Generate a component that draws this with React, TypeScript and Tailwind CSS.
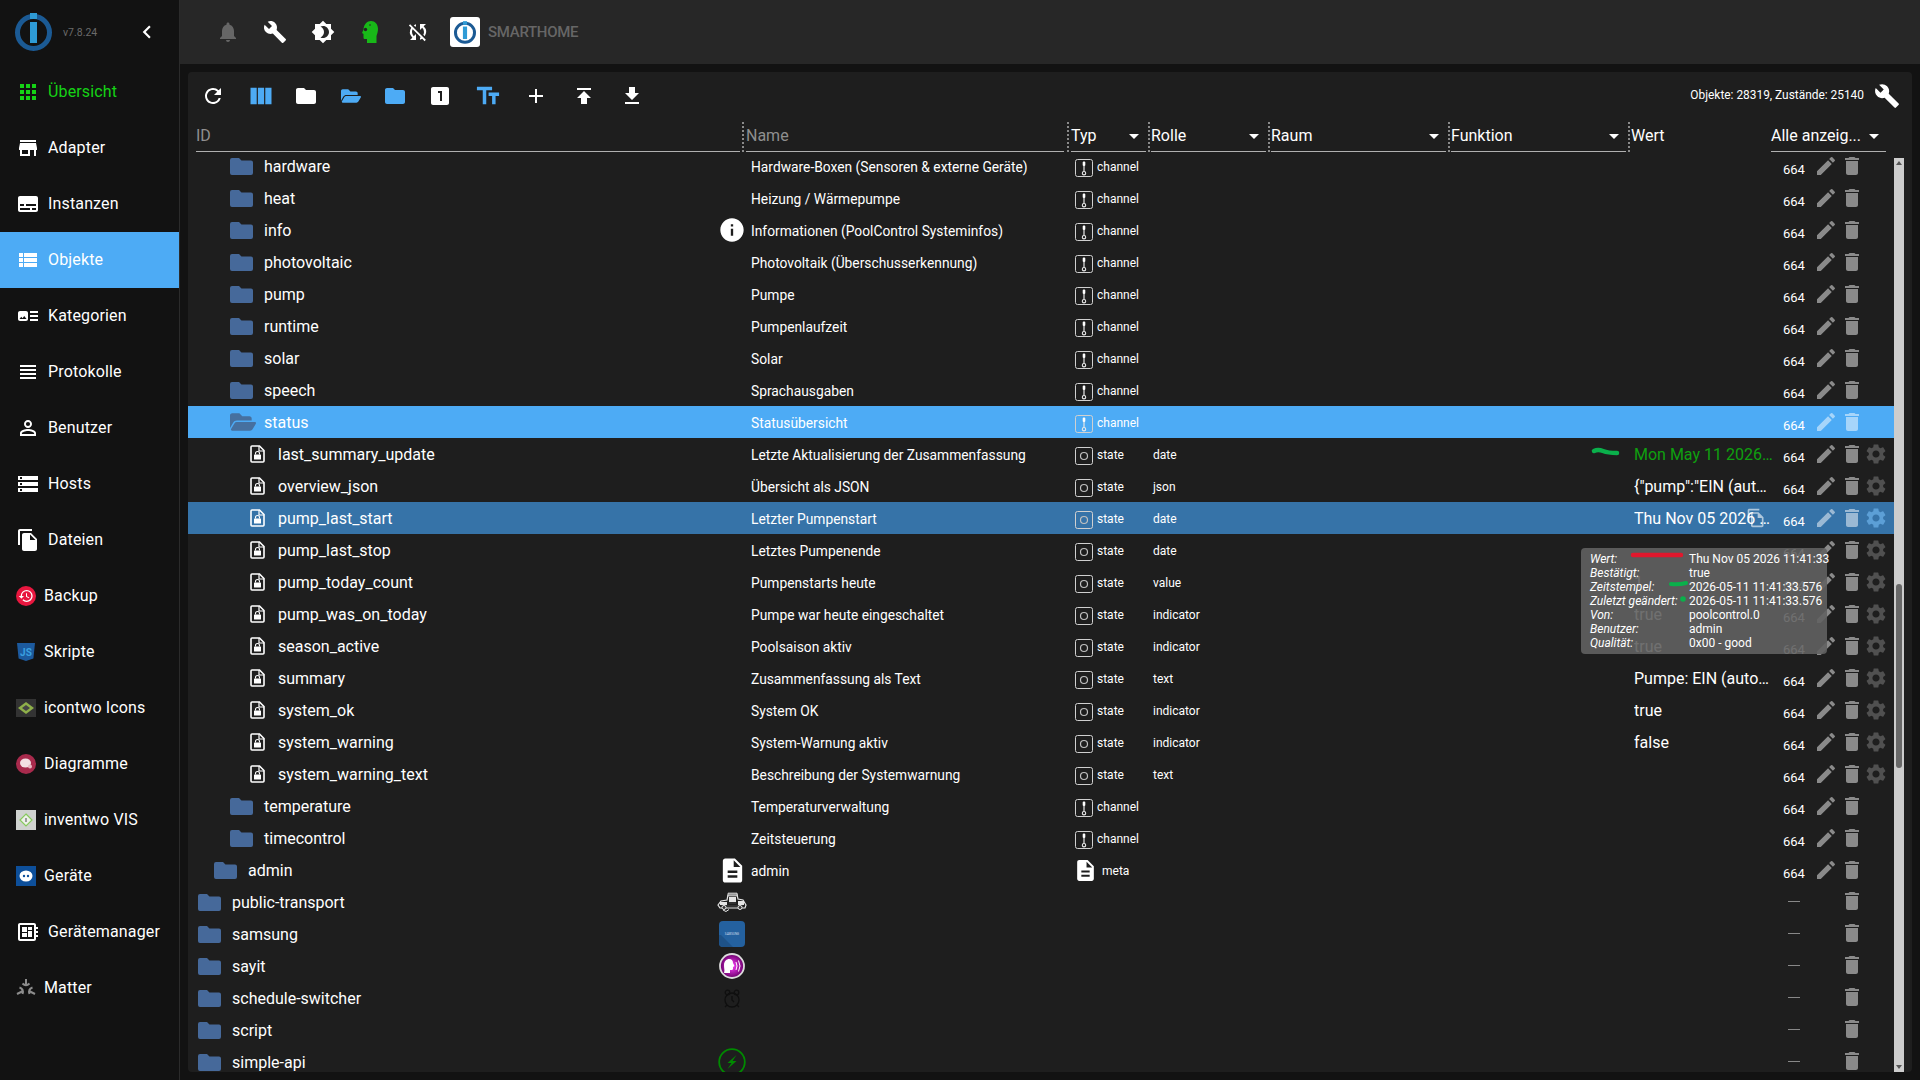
import type { ReactNode } from 'react';
import {
  MdAdd, MdApps, MdArrowDropDown, MdArtTrack, MdBrightness4, MdBuild, MdChevronLeft, MdDelete, MdDescription,
  MdDeveloperBoard, MdEdit, MdFileCopy, MdFolder, MdGetApp, MdHistory, MdInfo, MdLooksOne, MdNotifications,
  MdOutlineFileCopy, MdPersonOutline, MdPublish, MdRefresh, MdSettings, MdStorage, MdStore, MdSubtitles, MdSyncDisabled,
  MdTextFields, MdViewColumn, MdViewHeadline, MdViewList,
} from 'react-icons/md';
import { FaFolderOpen } from 'react-icons/fa';

function IoLogo({ className }: { className?: string }) {
  return (
    <svg viewBox="0 0 37 38" className={className}>
      <circle cx="18.5" cy="19.5" r="16" fill="none" stroke="#1b5a94" strokeWidth="5" />
      <rect x="15" y="0" width="7" height="6" fill="#2e9bd6" />
      <rect x="15" y="9" width="7" height="21" fill="#2e9bd6" />
    </svg>
  );
}

function BackupImg() {
  return (
    <span className="flex w-5 h-5 items-center justify-center rounded-full bg-[#e8173f] text-white"><MdHistory size={16} /></span>
  );
}

function ScriptsImg() {
  return (
    <svg viewBox="0 0 20 20" className="w-5 h-5">
      <path d="M1 1h18l-1.6 15.5L10 19l-7.4-2.5z" fill="#1c5a9e" />
      <text x="10" y="14" textAnchor="middle" fontSize="10" fontWeight="700" fill="#3aa0e0" fontFamily="Roboto, sans-serif">JS</text>
    </svg>
  );
}

function IcontwoImg() {
  return (
    <svg viewBox="0 0 20 20" className="w-5 h-5">
      <rect x="0" y="1" width="20" height="18" fill="#333" />
      <path d="M10 4l8 6-8 6-8-6z" fill="#8fb04a" />
      <path d="M10 7l4 3-4 3-4-3z" fill="#444" />
    </svg>
  );
}

function DiagramImg() {
  return (
    <svg viewBox="0 0 20 20" className="w-5 h-5">
      <circle cx="10" cy="10" r="10" fill="#a82a4c" />
      <ellipse cx="9.5" cy="9" rx="5.5" ry="4.5" fill="#f3dfe3" />
      <circle cx="14" cy="12.5" r="2" fill="#e7b9c3" />
    </svg>
  );
}

function VisImg() {
  return (
    <svg viewBox="0 0 20 20" className="w-5 h-5">
      <rect width="20" height="20" fill="#cfd2cf" />
      <path d="M10 4l6 6-6 6-6-6z" fill="#eef2ea" stroke="#86c95c" strokeWidth="1.2" />
      <rect x="9.4" y="8" width="1.2" height="4" fill="#666" />
    </svg>
  );
}

function DevicesImg() {
  return (
    <svg viewBox="0 0 20 20" className="w-5 h-5">
      <rect width="20" height="20" fill="#0d4f9a" />
      <ellipse cx="10" cy="10" rx="6.5" ry="5.5" fill="#fff" />
      <circle cx="8" cy="10" r="1.2" fill="#0d4f9a" />
      <circle cx="12" cy="10" r="1.2" fill="#0d4f9a" />
    </svg>
  );
}

function MatterImg() {
  return (
    <svg viewBox="0 0 20 20" className="w-5 h-5" fill="none" stroke="#8c8c8c" strokeWidth="2">
      <path d="M10 1v6" />
      <path d="M6.5 5.5Q10 9 13.5 5.5" />
      <path d="M1 16l6-3" />
      <path d="M3.5 9.5Q8 11 6.5 16" />
      <path d="M19 16l-6-3" />
      <path d="M16.5 9.5Q12 11 13.5 16" />
    </svg>
  );
}

const NAV: { label: string; icon: ReactNode; img?: boolean }[] = [
  { label: 'Übersicht', icon: <MdApps size={24} /> },
  { label: 'Adapter', icon: <MdStore size={24} /> },
  { label: 'Instanzen', icon: <MdSubtitles size={24} /> },
  { label: 'Objekte', icon: <MdViewList size={24} /> },
  { label: 'Kategorien', icon: <MdArtTrack size={24} /> },
  { label: 'Protokolle', icon: <MdViewHeadline size={24} /> },
  { label: 'Benutzer', icon: <MdPersonOutline size={24} /> },
  { label: 'Hosts', icon: <MdStorage size={24} /> },
  { label: 'Dateien', icon: <MdFileCopy size={24} /> },
  { label: 'Backup', icon: <BackupImg />, img: true },
  { label: 'Skripte', icon: <ScriptsImg />, img: true },
  { label: 'icontwo Icons', icon: <IcontwoImg />, img: true },
  { label: 'Diagramme', icon: <DiagramImg />, img: true },
  { label: 'inventwo VIS', icon: <VisImg />, img: true },
  { label: 'Geräte', icon: <DevicesImg />, img: true },
  { label: 'Gerätemanager', icon: <MdDeveloperBoard size={24} /> },
  { label: 'Matter', icon: <MatterImg />, img: true },
];

function Sidebar() {
  return (
    <aside className="w-[180px] shrink-0 flex flex-col bg-[#121212] border-r border-[#2b2b2b]">
      <div className="h-16 flex items-center pl-[15px]">
        <IoLogo className="w-[37px] h-[38px] shrink-0" />
        <span className="ml-[11px] mt-[2px] w-[36px] shrink-0 text-[10.5px] text-[#6a6a6a]">v7.8.24</span>
        <MdChevronLeft size={26} className="text-white ml-[35px] shrink-0" />
      </div>
      {NAV.map(item => (
        <div
          key={item.label}
          className={`h-14 flex items-center gap-2 pl-4 text-[16px] tracking-[0.15px] ${item.label === 'Objekte' ? 'bg-[#4dabf5] text-white' : item.label === 'Übersicht' ? 'text-[#15d315]' : 'text-white'}`}
        >
          <span className={`flex items-center justify-center ${item.img ? 'w-5' : 'w-6'}`}>{item.icon}</span>
          {item.label}
        </div>
      ))}
    </aside>
  );
}

function HeadIcon() {
  return (
    <svg viewBox="0 0 16 22" className="w-4 h-[22px]">
      <path d="M9 0c4 0 7 3 7 8 0 3-1 5-1.5 7v7H5v-4H3c-1 0-1.500-.5-1.500-1.500V13L0 12l1.500-3.500C2 3 5 0 9 0z" fill="#18b818" />
      <circle cx="3.500" cy="8.500" r="1.700" fill="#222" />
      <circle cx="8" cy="4" r="0.800" fill="#222" />
    </svg>
  );
}

function TopBar() {
  return (
    <header className="h-16 shrink-0 flex items-center pl-6 bg-[#272727]">
      <span className="w-[47.5px] flex justify-center text-[#666]"><MdNotifications size={24} /></span>
      <span className="w-[47.5px] flex justify-center text-white"><MdBuild size={24} /></span>
      <span className="w-[47.5px] flex justify-center text-white"><MdBrightness4 size={24} /></span>
      <span className="w-[47.5px] flex justify-center"><HeadIcon /></span>
      <span className="w-[47.5px] flex justify-center text-white"><MdSyncDisabled size={24} /></span>
      <span className="ml-[8.5px] w-[30px] h-[30px] flex items-center justify-center rounded-[3px] bg-white"><IoLogo className="w-[22px] h-[23px]" /></span>
      <span className="ml-2 text-[15px] tracking-[-0.3px] font-medium text-[#666]">SMARTHOME</span>
    </header>
  );
}

function Toolbar() {
  return (
    <div className="h-12 shrink-0 flex items-center pl-px pr-3">
      <span className="w-12 flex justify-center text-white"><MdRefresh size={24} /></span>
      <span className="w-[47px] flex justify-center text-[#4dabf5]"><MdViewColumn size={28} /></span>
      <span className="w-[44px] flex justify-center text-white"><MdFolder size={24} /></span>
      <span className="w-[45px] flex justify-center text-[#4dabf5]"><FaFolderOpen size={20} /></span>
      <span className="w-[43px] flex justify-center text-[#4dabf5]"><MdFolder size={24} /></span>
      <span className="w-[48px] flex justify-center text-white"><MdLooksOne size={24} /></span>
      <span className="w-[48px] flex justify-center text-[#4dabf5]"><MdTextFields size={28} /></span>
      <span className="w-[48px] flex justify-center text-white"><MdAdd size={24} /></span>
      <span className="w-[48px] flex justify-center text-white"><MdPublish size={24} /></span>
      <span className="w-[48px] flex justify-center text-white"><MdGetApp size={24} /></span>
      <span className="ml-auto text-[11.9px] text-white mr-[10px]">Objekte: 28319, Zustände: 25140</span>
      <MdBuild size={26} className="text-white" />
    </div>
  );
}

function Separator({ className }: { className: string }) {
  return (
    <div className={`h-[30px] self-end flex justify-center ${className}`}>
      <span className="h-full border-l-2 border-dotted border-[#8a8a8a]" />
    </div>
  );
}

function FilterCell({ label, width, select }: { label: string; width: string; select?: boolean }) {
  return (
    <div className={`h-[30px] self-end flex items-center justify-between pb-[2px] border-b border-[#b0b0b0] text-[16px] ${width} ${select ? 'text-white' : 'text-[#8f8f8f]'}`}>
      <span>{label}</span>
      {select && <MdArrowDropDown size={24} className="text-white" />}
    </div>
  );
}

function HeaderRow() {
  return (
    <div className="relative z-10 h-8 -mb-[2px] shrink-0 flex pl-2">
      <FilterCell label="ID" width="w-[544px]" />
      <Separator className="w-[6px]" />
      <FilterCell label="Name" width="w-[318px]" />
      <Separator className="w-[7px]" />
      <FilterCell label="Typ" width="w-[75px]" select />
      <Separator className="w-[5px]" />
      <FilterCell label="Rolle" width="w-[115px]" select />
      <Separator className="w-[5px]" />
      <FilterCell label="Raum" width="w-[175px]" select />
      <Separator className="w-[5px]" />
      <FilterCell label="Funktion" width="w-[175px]" select />
      <Separator className="w-[5px]" />
      <div className="h-[30px] w-[140px] self-end flex items-center pb-[3px] text-[16px] text-white">Wert</div>
      <FilterCell label="Alle anzeig..." width="w-[115px]" select />
    </div>
  );
}

function FolderIcon() {
  return (
    <svg viewBox="0 0 23 17" className="w-[23px] h-[17px] shrink-0">
      <path d="M2 0h7l2.500 2.500H21a2 2 0 0 1 2 2V15a2 2 0 0 1-2 2H2a2 2 0 0 1-2-2V2a2 2 0 0 1 2-2z" fill="#46699a" />
    </svg>
  );
}

function StateFile() {
  return (
    <svg viewBox="0 0 15 18" className="w-[15px] h-[18px] shrink-0">
      <path d="M2 1h7.500L14 5.500V16a1 1 0 0 1-1 1H2a1 1 0 0 1-1-1V2a1 1 0 0 1 1-1z" fill="none" stroke="#fff" strokeWidth="1.600" />
      <path d="M9 1v5h5" fill="none" stroke="#fff" strokeWidth="1.200" />
      <rect x="4" y="9.500" width="7" height="5" rx="0.600" fill="#fff" />
      <path d="M5.500 9.500V8.500a2 2 0 0 1 4 0v1" fill="none" stroke="#fff" strokeWidth="1.100" />
    </svg>
  );
}

function ChannelIcon() {
  return (
    <svg viewBox="0 0 18 18" className="w-[18px] h-[18px] shrink-0 mt-1">
      <rect x="0.500" y="0.500" width="17" height="17" rx="2" fill="none" stroke="#d0d0d0" />
      <rect x="7.700" y="2.500" width="2.600" height="4.500" rx="1" fill="#fff" />
      <path d="M9 7v5.500" stroke="#e8e8e8" strokeWidth="1.200" />
      <circle cx="9" cy="14.200" r="1.700" fill="none" stroke="#e8e8e8" strokeWidth="1.100" />
    </svg>
  );
}

function StateIcon() {
  return (
    <svg viewBox="0 0 18 18" className="w-[18px] h-[18px] shrink-0 mt-1">
      <rect x="0.500" y="0.500" width="17" height="17" rx="2" fill="none" stroke="#d0d0d0" />
      <circle cx="9" cy="9" r="3.500" fill="none" stroke="#c0c0c0" strokeWidth="1.200" />
    </svg>
  );
}

function TrainImg() {
  return (
    <svg viewBox="0 0 30 20" className="w-[30px] h-5 shrink-0" fill="none" stroke="#e8e8e8">
      <path d="M1 13l3-4 6-1 1-5 3-1h6l1 5 5 1 3 5-1 3H3z" strokeWidth="1.200" />
      <path d="M11 1h9v3h-9z" fill="#999" stroke="#eee" strokeWidth="0.600" />
      <path d="M3 10h7v3H3zM12 5h7v5h-7zM21 9h6v4h-6z" fill="#e4e4e4" stroke="none" />
      <path d="M12 11h7M4 14h22" stroke="#444" strokeWidth="1" />
      <circle cx="7" cy="15.500" r="2" fill="#333" />
      <circle cx="23" cy="15.500" r="2" fill="#333" />
      <path d="M6 18l3 1.500 3-2" strokeWidth="1" />
    </svg>
  );
}

function SamsungImg() {
  return (
    <svg viewBox="0 0 26 26" className="w-[26px] h-[26px] shrink-0">
      <rect width="26" height="26" rx="4" fill="#24619f" />
      <path d="M2 14l12 12H4a4 4 0 0 1-4-4v-8z" fill="#1e5288" />
      <text x="13" y="14.200" textAnchor="middle" fontSize="3" fill="#cfdceb" fontFamily="Roboto, sans-serif">SAMSUNG</text>
    </svg>
  );
}

function SayitImg() {
  return (
    <svg viewBox="0 0 26 26" className="w-[26px] h-[26px] shrink-0">
      <defs>
        <radialGradient id="sayit-bg" cx="0.500" cy="0.500" r="0.500">
          <stop offset="0" stopColor="#ff40ff" />
          <stop offset="1" stopColor="#6a006a" />
        </radialGradient>
      </defs>
      <circle cx="13" cy="13" r="12" fill="url(#sayit-bg)" stroke="#ddd" strokeWidth="1.800" />
      <path d="M5 20c1-3 0-4 0-8 0-4 3-6 5-6 3 0 4 2 4 4l1.500 3-1.500 1v2c0 1-1.500 1-3 1v3z" fill="#fff" />
      <path d="M17 9q2 4 0 8M19.500 7.500q3 5.500 0 11" fill="none" stroke="#fff" strokeWidth="1" />
    </svg>
  );
}

function ClockImg() {
  return (
    <svg viewBox="0 0 24 24" className="w-6 h-6 shrink-0 mt-[2px]" fill="none" stroke="#0f0f0f" strokeWidth="1.300">
      <circle cx="12" cy="13" r="7" />
      <path d="M12 9v4l2 2M5 20l2-2M19 20l-2-2" />
      <circle cx="7.500" cy="5.500" r="2.300" />
      <circle cx="16.500" cy="5.500" r="2.300" />
    </svg>
  );
}

function ApiImg() {
  return (
    <svg viewBox="0 0 28 28" className="w-7 h-7 shrink-0">
      <circle cx="14" cy="14" r="12.800" fill="none" stroke="#008a00" strokeWidth="1.800" />
      <path d="M18.500 7l-9 8h4l-4 6 9-8h-4z" fill="#008a00" />
    </svg>
  );
}

type Row = {
  id: string;
  name?: string;
  depth: 0 | 1 | 2 | 3;
  kind: 'folder' | 'open' | 'state';
  type?: 'channel' | 'state' | 'meta';
  role?: string;
  value?: string;
  count?: boolean;
  gear?: boolean;
  img?: ReactNode;
  green?: boolean;
  tone?: 'selected' | 'hover';
};

const channel = (id: string, name: string): Row => ({ id, name, depth: 2, kind: 'folder', type: 'channel', count: true });
const state = (id: string, name: string, role: string, value?: string): Row => ({ id, name, depth: 3, kind: 'state', type: 'state', role, value, count: true, gear: true });

const ROWS: Row[] = [
  channel('hardware', 'Hardware-Boxen (Sensoren & externe Geräte)'),
  channel('heat', 'Heizung / Wärmepumpe'),
  { ...channel('info', 'Informationen (PoolControl Systeminfos)'), img: <MdInfo size={28} className="text-white shrink-0" /> },
  channel('photovoltaic', 'Photovoltaik (Überschusserkennung)'),
  channel('pump', 'Pumpe'),
  channel('runtime', 'Pumpenlaufzeit'),
  channel('solar', 'Solar'),
  channel('speech', 'Sprachausgaben'),
  { ...channel('status', 'Statusübersicht'), kind: 'open', tone: 'selected' },
  { ...state('last_summary_update', 'Letzte Aktualisierung der Zusammenfassung', 'date', 'Mon May 11 2026 11:41:33'), green: true },
  state('overview_json', 'Übersicht als JSON', 'json', '{"pump":"EIN (automatik)"}'),
  { ...state('pump_last_start', 'Letzter Pumpenstart', 'date', 'Thu Nov 05 2026 11:41:33'), tone: 'hover' },
  state('pump_last_stop', 'Letztes Pumpenende', 'date'),
  state('pump_today_count', 'Pumpenstarts heute', 'value', '1'),
  state('pump_was_on_today', 'Pumpe war heute eingeschaltet', 'indicator', 'true'),
  state('season_active', 'Poolsaison aktiv', 'indicator', 'true'),
  state('summary', 'Zusammenfassung als Text', 'text', 'Pumpe: EIN (automatik)'),
  state('system_ok', 'System OK', 'indicator', 'true'),
  state('system_warning', 'System-Warnung aktiv', 'indicator', 'false'),
  state('system_warning_text', 'Beschreibung der Systemwarnung', 'text'),
  channel('temperature', 'Temperaturverwaltung'),
  channel('timecontrol', 'Zeitsteuerung'),
  { id: 'admin', name: 'admin', depth: 1, kind: 'folder', type: 'meta', count: true, img: <MdDescription size={29} className="text-white shrink-0" /> },
  { id: 'public-transport', depth: 0, kind: 'folder', img: <TrainImg /> },
  { id: 'samsung', depth: 0, kind: 'folder', img: <SamsungImg /> },
  { id: 'sayit', depth: 0, kind: 'folder', img: <SayitImg /> },
  { id: 'schedule-switcher', depth: 0, kind: 'folder', img: <ClockImg /> },
  { id: 'script', depth: 0, kind: 'folder' },
  { id: 'simple-api', depth: 0, kind: 'folder', img: <ApiImg /> },
];

const INDENT = { 0: 'pl-[10px]', 1: 'pl-[26px]', 2: 'pl-[42px]', 3: 'pl-[62px]' };

function TreeRow({ row }: { row: Row }) {
  const tone = row.tone === 'selected' ? 'bg-[#4dabf5]' : row.tone === 'hover' ? 'bg-[#3673a8]' : '';
  const actionTone = row.tone ? 'text-white/50' : 'text-[#8a8a8a]';
  const gearTone = row.tone === 'hover' ? 'text-[#5c9fd6]' : 'text-[#505050]';
  return (
    <div className={`h-8 shrink-0 flex items-center text-white ${tone}`}>
      <div className={`w-[532px] shrink-0 flex items-center text-[16px] ${INDENT[row.depth]}`}>
        {row.kind === 'folder' && <FolderIcon />}
        {row.kind === 'open' && <FaFolderOpen size={26} className="shrink-0 text-[#46709f]" />}
        {row.kind === 'state' && <StateFile />}
        <span className={`pt-[2px] ${row.kind === 'state' ? 'ml-[13px]' : row.kind === 'open' ? 'ml-2' : 'ml-[11px]'}`}>{row.id}</span>
      </div>
      <div className="w-6 shrink-0 flex justify-center">{row.img}</div>
      <div className="w-[331px] shrink-0 pl-[7px] pt-[2px] text-[13.8px]">{row.name}</div>
      <div className="w-[78px] shrink-0 flex items-center text-[12px]">
        {row.type === 'channel' && <ChannelIcon />}
        {row.type === 'state' && <StateIcon />}
        {row.type === 'meta' && <MdDescription size={25} className="-ml-[2px]" />}
        {row.type && <span className="ml-1 pt-[2px]">{row.type}</span>}
      </div>
      <div className="w-[481px] shrink-0 pt-[2px] text-[12px]">{row.role}</div>
      <div className={`relative w-[149px] shrink-0 pr-[9px] pt-[2px] text-[16px] ${row.green ? 'text-[#0fa00f]' : ''}`}>
        <div className="truncate">{row.value}</div>
        {row.tone === 'hover' && <MdOutlineFileCopy size={20} className="absolute left-[112px] top-[3px] text-white/60" />}
      </div>
      <div className={`w-[30px] shrink-0 text-[13px] ${row.count ? 'pt-2' : 'pb-[2px]'}`}>
        {row.count ? '664' : <span className="block ml-[5px] w-3 h-px bg-[#888]" />}
      </div>
      <div className="ml-px w-6 shrink-0 flex justify-center">
        {row.count && <MdEdit size={24} className={actionTone} />}
      </div>
      <div className={`ml-[2px] w-6 shrink-0 flex justify-center ${row.count ? '' : 'pb-[2px]'}`}>
        <MdDelete size={24} className={actionTone} />
      </div>
      <div className="w-6 shrink-0 flex justify-center">
        {row.gear && <MdSettings size={24} className={gearTone} />}
      </div>
    </div>
  );
}

function Scrollbar() {
  return (
    <div className="mt-2 w-[10px] shrink-0 flex flex-col items-center bg-[#cdcdcd]">
      <span className="mt-[3px] w-0 h-0 border-x-[3px] border-x-transparent border-b-[4px] border-b-[#555]" />
      <span className="mt-[419px] w-[6px] h-[184px] shrink-0 rounded-[3px] bg-[#686868]" />
      <span className="mt-auto mb-[3px] w-0 h-0 border-x-[3px] border-x-transparent border-t-[4px] border-t-[#555]" />
    </div>
  );
}

const TOOLTIP = [
  ['Wert:', 'Thu Nov 05 2026 11:41:33'],
  ['Bestätigt:', 'true'],
  ['Zeitstempel:', '2026-05-11 11:41:33.576'],
  ['Zuletzt geändert:', '2026-05-11 11:41:33.576'],
  ['Von:', 'poolcontrol.0'],
  ['Benutzer:', 'admin'],
  ['Qualität:', '0x00 - good'],
];

function Tooltip() {
  return (
    <div className="absolute z-20 left-[1393px] top-[476px] w-[246px] h-[106px] pl-[9px] pt-[4px] rounded bg-[#616161]/90 text-[12px] leading-[14px] text-white">
      {TOOLTIP.map(([label, value]) => (
        <div key={label} className="flex">
          <span className="w-[99px] shrink-0 italic">{label}</span>
          <span className="whitespace-nowrap">{value}</span>
        </div>
      ))}
    </div>
  );
}

export default function App() {
  return (
    <div className="w-[1920px] h-[1080px] flex overflow-hidden bg-[#121212] font-[Roboto,sans-serif]">
      <Sidebar />
      <main className="flex-1 min-w-0 flex flex-col">
        <TopBar />
        <div className="flex-1 min-h-0 p-2">
          <div className="relative h-full flex flex-col rounded bg-[#1e1e1e] overflow-hidden">
            <Toolbar />
            <HeaderRow />
            <div className="flex-1 min-h-0 flex pr-2">
              <div className="flex-1 min-w-0 flex flex-col overflow-hidden">
                {ROWS.map(row => <TreeRow key={row.id} row={row} />)}
              </div>
              <Scrollbar />
            </div>
            <Tooltip />
            {/* hand-drawn marks on the screenshot */}
            <svg viewBox="0 0 40 16" className="absolute z-30 left-[1400px] top-[372px] w-10 h-4" fill="none" strokeLinecap="round">
              <path d="M6 7q4-2 9 0t14 2" stroke="#0ab04b" strokeWidth="4.500" />
            </svg>
            <svg viewBox="0 0 60 60" className="absolute z-30 left-[1440px] top-[480px] w-[60px] h-[60px]" fill="none" strokeLinecap="round">
              <path d="M5 3h48" stroke="#e0182d" strokeWidth="4.500" />
              <path d="M43 32q8 1 15-1" stroke="#0ab04b" strokeWidth="4" />
              <circle cx="55" cy="47" r="2.800" fill="#0ab04b" />
            </svg>
          </div>
        </div>
      </main>
    </div>
  );
}
